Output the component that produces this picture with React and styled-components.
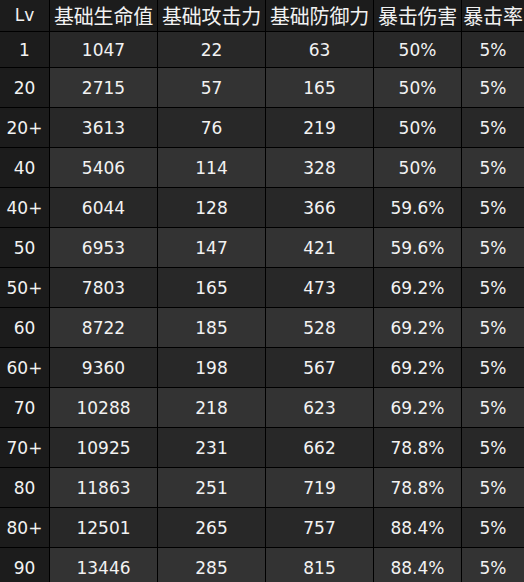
import React from "react";
import styled, { createGlobalStyle } from "styled-components";

const Global = createGlobalStyle`
  html, body { margin: 0; padding: 0; background: #000; overflow: hidden; }
  body { width: 524px; height: 582px; }
`;

const Grid = styled.div`
  display: grid;
  grid-template-columns: 49px 107px 107px 107px 87px 62px;
  grid-template-rows: 31px 35px repeat(13, 39px);
  gap: 1px;
  background: #000;
  width: 524px;
  color: #f2f2f2;
  font-family: "DejaVu Sans", "Noto Sans CJK SC", sans-serif;
`;

const Cell = styled.div`
  display: flex;
  align-items: center;
  justify-content: center;
  white-space: nowrap;
  overflow: hidden;
  font-size: 17px;
  background: ${(p) => (p.$dark ? "#1c1c1c" : p.$alt ? "#333333" : "#282828")};
`;

const HeadCell = styled(Cell)`
  background: #1c1c1c;
  font-family: ${(p) => (p.$latin ? '"DejaVu Sans", sans-serif' : '"Noto Sans CJK SC", sans-serif')};
  font-size: ${(p) => (p.$latin ? "17px" : "20px")};
  letter-spacing: ${(p) => (p.$latin ? "0" : "-0.2px")};
  padding-bottom: 1px;
`;

const headers = ["Lv", "基础生命值", "基础攻击力", "基础防御力", "暴击伤害", "暴击率"];

const rows = [
  ["1", "1047", "22", "63", "50%", "5%"],
  ["20", "2715", "57", "165", "50%", "5%"],
  ["20+", "3613", "76", "219", "50%", "5%"],
  ["40", "5406", "114", "328", "50%", "5%"],
  ["40+", "6044", "128", "366", "59.6%", "5%"],
  ["50", "6953", "147", "421", "59.6%", "5%"],
  ["50+", "7803", "165", "473", "69.2%", "5%"],
  ["60", "8722", "185", "528", "69.2%", "5%"],
  ["60+", "9360", "198", "567", "69.2%", "5%"],
  ["70", "10288", "218", "623", "69.2%", "5%"],
  ["70+", "10925", "231", "662", "78.8%", "5%"],
  ["80", "11863", "251", "719", "78.8%", "5%"],
  ["80+", "12501", "265", "757", "88.4%", "5%"],
  ["90", "13446", "285", "815", "88.4%", "5%"],
];

export default function App() {
  return (
    <>
      <Global />
      <Grid>
        {headers.map((h, i) => (
          <HeadCell key={h} $latin={i === 0}>
            {h}
          </HeadCell>
        ))}
        {rows.map((r, ri) =>
          r.map((v, ci) => (
            <Cell key={`${ri}-${ci}`} $dark={ci === 0} $alt={ri % 2 === 1}>
              {v}
            </Cell>
          ))
        )}
      </Grid>
    </>
  );
}
